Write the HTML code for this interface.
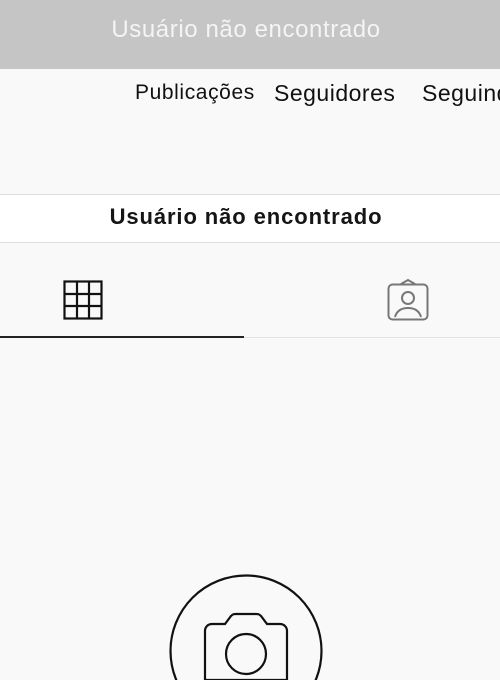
<!DOCTYPE html><html><head><style>
html,body{margin:0;width:500px;height:680px;overflow:hidden}
body{background:#f9f9f9;font-family:"Liberation Sans",sans-serif;position:relative}
.a{position:absolute}
</style></head><body>
<div class="a" style="left:0;top:0;width:500px;height:69px;background:#c5c5c5"></div>
<div class="a" style="left:0;top:16px;width:492px;text-align:center;color:#f4f4f4;font-size:24px;letter-spacing:0.6px">Usuário não encontrado</div>
<div class="a" style="left:135px;top:81px;font-size:21px;letter-spacing:0.6px;color:#111;white-space:nowrap">Publicações</div>
<div class="a" style="left:274px;top:80px;font-size:23px;letter-spacing:0.5px;color:#111;white-space:nowrap">Seguidores</div>
<div class="a" style="left:422px;top:80px;font-size:23px;letter-spacing:0.5px;color:#111;white-space:nowrap">Seguindo</div>
<div class="a" style="left:0;top:194px;width:500px;height:49px;background:#fff;border-top:1px solid #ddd;border-bottom:1px solid #ddd;box-sizing:border-box"></div>
<div class="a" style="left:0;top:204px;width:492px;text-align:center;font-size:22px;letter-spacing:0.9px;font-weight:bold;color:#151515">Usuário não encontrado</div>
<svg class="a" style="left:0;top:0;overflow:hidden" width="500" height="680" viewBox="0 0 500 680">
<g fill="none" stroke="#111" stroke-width="2.2">
<rect x="64.5" y="281.5" width="37" height="37"/>
<path d="M77 281v38M89 281v38M64 294h38M64 306h38"/>
</g>
<g fill="none" stroke="#777" stroke-width="2">
<rect x="388.5" y="284.5" width="39" height="35" rx="4"/>
<path d="M401 284l7-4 7 4"/>
<circle cx="408" cy="298" r="6"/>
<path d="M395 317c2-7 7-9 13-9s11 2 13 9"/>
</g>
<rect x="0" y="336" width="244" height="2" fill="#222"/>
<rect x="244" y="337" width="256" height="1" fill="#e2e2e2"/>
<g fill="none" stroke="#111" stroke-width="2.2">
<circle cx="246" cy="651" r="75.5"/>
<path d="M212 624h13l6-8c2-2 3-2 5-2h20c2 0 3 0 5 2l6 8h13c4 0 7 3 7 7v49h-82v-49c0-4 3-7 7-7z"/>
<circle cx="246" cy="654" r="20"/>
</g>
</svg>
</body></html>
